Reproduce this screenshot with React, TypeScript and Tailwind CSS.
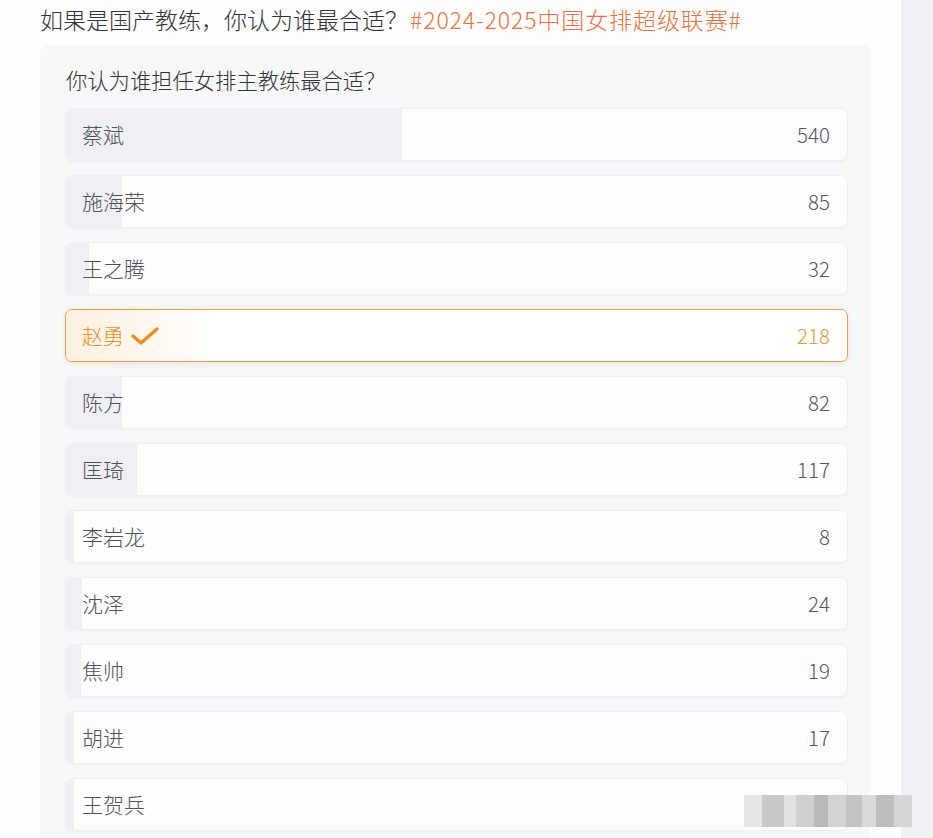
import React from "react";

const rows: { name: string; votes: number; bar: number; selected?: boolean }[] = [
  { name: "蔡斌", votes: 540, bar: 336 },
  { name: "施海荣", votes: 85, bar: 56 },
  { name: "王之腾", votes: 32, bar: 23 },
  { name: "赵勇", votes: 218, bar: 140, selected: true },
  { name: "陈方", votes: 82, bar: 56 },
  { name: "匡琦", votes: 117, bar: 71 },
  { name: "李岩龙", votes: 8, bar: 8 },
  { name: "沈泽", votes: 24, bar: 16 },
  { name: "焦帅", votes: 19, bar: 15 },
  { name: "胡进", votes: 17, bar: 8 },
  { name: "王贺兵", votes: 0, bar: 8 },
];

const font = { fontFamily: '"Noto Sans CJK SC", "Noto Sans", sans-serif' };

function Row({ r, last }: { r: (typeof rows)[number]; last: boolean }) {
  if (r.selected) {
    return (
      <div className="relative h-[53px] rounded-[7px] border border-[#e9a04a] bg-white overflow-hidden flex items-center shadow-[0_1px_4px_rgba(235,162,74,0.3)]">
        <div
          className="absolute left-0 top-0 bottom-0 bg-gradient-to-r from-[#fff1e0] to-[#fffdfb]"
          style={{ width: r.bar }}
        />
        <div className="relative flex-1 flex items-center pl-[16px] pr-[17px]">
          <span className="text-[21px] text-[#ea8f1f] font-light">{r.name}</span>
          <svg width="30" height="22" viewBox="0 0 30 22" className="ml-[6px]">
            <path d="M3 11 L11 18 L27 4" fill="none" stroke="#ef8a1e" strokeWidth="3.4" strokeLinecap="round" strokeLinejoin="round" />
          </svg>
          <span className="ml-auto text-[20.5px] text-[#e89a35] font-light">{r.votes}</span>
        </div>
      </div>
    );
  }
  return (
    <div className="relative h-[53px] rounded-[7px] border border-[#eef0f3] bg-[#fdfdfe] overflow-hidden flex items-center shadow-[0_1px_2px_rgba(0,0,0,0.03)]">
      <div className="absolute left-0 top-0 bottom-0 bg-[#eff0f3]" style={{ width: r.bar }} />
      <div className="relative flex-1 flex items-center pl-[16px] pr-[17px]">
        <span className="text-[21px] text-[#505258] font-light">{r.name}</span>
        {!last && <span className="ml-auto text-[20.5px] text-[#55575c] font-light">{r.votes}</span>}
      </div>
    </div>
  );
}

export default function App() {
  return (
    <div className="relative w-full h-[838px] overflow-hidden flex bg-white" style={font}>
      <div className="w-[901px] shrink-0 bg-[#fefefe] pl-[40px]">
        <div className="h-[38px] text-[23px] leading-[38px] text-[#333] whitespace-nowrap font-light">
          如果是国产教练，你认为谁最合适？
          <span className="ml-[2px] text-[#e6733f] tracking-[0.9px]">#2024-2025中国女排超级联赛#</span>
        </div>
        <div className="mt-[7px] w-[830px] h-[900px] bg-[#f7f8fa] rounded-[6px] pt-[23px] pl-[25px] pr-[22px]">
          <div className="h-[24px] leading-[24px] text-[21.3px] text-[#333] pl-[1px] font-light">你认为谁担任女排主教练最合适？</div>
          <div className="mt-[16px] flex flex-col gap-[14px]">
            {rows.map((r, i) => (
              <Row key={r.name} r={r} last={i === rows.length - 1} />
            ))}
          </div>
        </div>
      </div>
      <div className="flex-1 bg-[#eff1f7]" />
      <div className="absolute left-[744px] top-[795px] w-[168px] h-[32px] flex">
        <div className="w-[18px] h-full bg-[#e6e6e8]" />
        <div className="w-[22px] h-full bg-[#c9c9cc]" />
        <div className="w-[12px] h-full bg-[#e2e2e4]" />
        <div className="w-[18px] h-full bg-[#cfcfd1]" />
        <div className="w-[14px] h-full bg-[#b9b9bc]" />
        <div className="w-[18px] h-full bg-[#d3d3d5]" />
        <div className="w-[16px] h-full bg-[#c3c3c6]" />
        <div className="w-[14px] h-full bg-[#dadadc]" />
        <div className="w-[18px] h-full bg-[#bebec1]" />
        <div className="w-[18px] h-full bg-[#d6d6d8]" />
      </div>
    </div>
  );
}
